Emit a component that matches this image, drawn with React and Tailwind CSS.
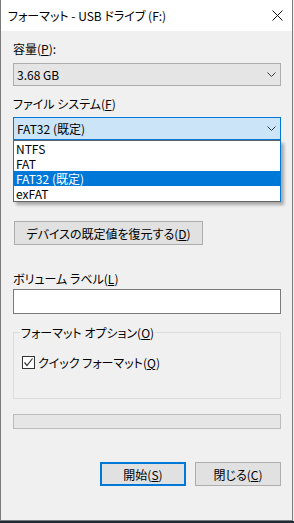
import React from "react";

const font = {
  fontFamily: '"Noto Sans CJK JP", "Noto Sans", sans-serif',
};

function Chevron() {
  return (
    <svg width="9" height="5" viewBox="0 0 9 5" className="shrink-0">
      <polyline points="0.5,0.5 4.5,4.5 8.5,0.5" fill="none" stroke="#3c3c3c" strokeWidth="1" />
    </svg>
  );
}

function Key({ k }) {
  return (
    <>
      (<u className="underline-offset-[1px]">{k}</u>)
    </>
  );
}

export default function App() {
  const items = ["NTFS", "FAT", "FAT32 (既定)", "exFAT"];

  return (
    <div
      className="w-[294px] h-[523px] flex flex-col bg-[#f0f0f0] text-[12px] text-black [font-feature-settings:'palt']"
      style={font}
    >
      <div className="w-[293px] h-[521px] flex flex-col bg-[#f0f0f0] border-x border-b border-[#7a7a7a]">
        {/* タイトルバー */}
        <div className="h-[31px] shrink-0 bg-white flex items-center justify-between pl-[7px] pr-[9px]">
          <span className="leading-[15px]">フォーマット - USB ドライブ (F:)</span>
          <svg width="11" height="11" viewBox="0 0 11 11">
            <path d="M0.5 0.5 L10.5 10.5 M10.5 0.5 L0.5 10.5" stroke="#111" strokeWidth="1" />
          </svg>
        </div>

        {/* 本体 */}
        <div className="flex flex-col pl-[12px] pr-[11px] pt-[10px] w-[291px]">
          <div className="h-[15px] leading-[15px]">
            容量<Key k="P" />:
          </div>
          <div className="mt-[7px] h-[23px] flex items-center justify-between border border-[#adadad] bg-[#e5e5e5] pl-[3px] pr-[4px]">
            <span className="leading-[15px]">3.68 GB</span>
            <Chevron />
          </div>

          <div className="mt-[10px] h-[15px] leading-[15px]">
            ファイル システム<Key k="F" />
          </div>
          <div className="relative mt-[6px]">
            <div className="h-[23px] flex items-center justify-between border border-[#0078d7] bg-[#cce4f7] pl-[3px] pr-[4px]">
              <span className="leading-[15px]">FAT32 (既定)</span>
              <Chevron />
            </div>
            {/* ドロップダウン */}
            <div className="absolute top-full left-0 w-full h-[62px] bg-white border border-[#646464] border-r-[#0078d7] shadow-[3px_3px_3px_rgba(0,0,0,0.3)] z-10">
              {items.map((it, i) => (
                <div
                  key={it}
                  className={`h-[15px] leading-[15px] pl-[2px] ${
                    i === 2 ? "bg-[#0078d7] text-white" : ""
                  }`}
                >
                  {it}
                </div>
              ))}
            </div>
          </div>

          <button className="mt-[81px] ml-[1px] w-[189px] h-[24px] border border-[#adadad] bg-[#e1e1e1] leading-[15px] text-center">
            デバイスの既定値を復元する<Key k="D" />
          </button>

          <div className="mt-[26px] h-[15px] leading-[15px]">
            ボリューム ラベル<Key k="L" />
          </div>
          <div className="mt-[3px] h-[25px] border border-[#7a7a7a] bg-white" />

          <fieldset className="mt-[11px] border border-[#dcdcdc] pl-[8px] pb-[28px]">
            <legend className="ml-[-2px] px-[1px] h-[15px] leading-[15px]">
              フォーマット オプション<Key k="O" />
            </legend>
            <label className="mt-[15px] h-[15px] flex items-center gap-[3px] leading-[15px]">
              <span className="w-[13px] h-[13px] border border-[#333] bg-white flex items-center justify-center">
                <svg width="11" height="11" viewBox="0 0 11 11">
                  <polyline points="1.5,5.5 4,8.5 9.5,1.5" fill="none" stroke="#333" strokeWidth="1.2" />
                </svg>
              </span>
              <span>
                クイック フォーマット<Key k="Q" />
              </span>
            </label>
          </fieldset>

          <div className="mt-[15px] h-[15px] border border-[#bcbcbc] bg-[#e6e6e6]" />

          <div className="mt-[33px] flex justify-end gap-[9px]">
            <button className="w-[86px] h-[24px] border-2 border-[#0078d7] bg-[#e1e1e1] leading-[15px]">
              開始<Key k="S" />
            </button>
            <button className="w-[86px] h-[24px] border border-[#adadad] bg-[#e1e1e1] leading-[15px]">
              閉じる<Key k="C" />
            </button>
          </div>
        </div>
      </div>
      <div className="h-[2px] bg-[#1e2a36]" />
    </div>
  );
}
